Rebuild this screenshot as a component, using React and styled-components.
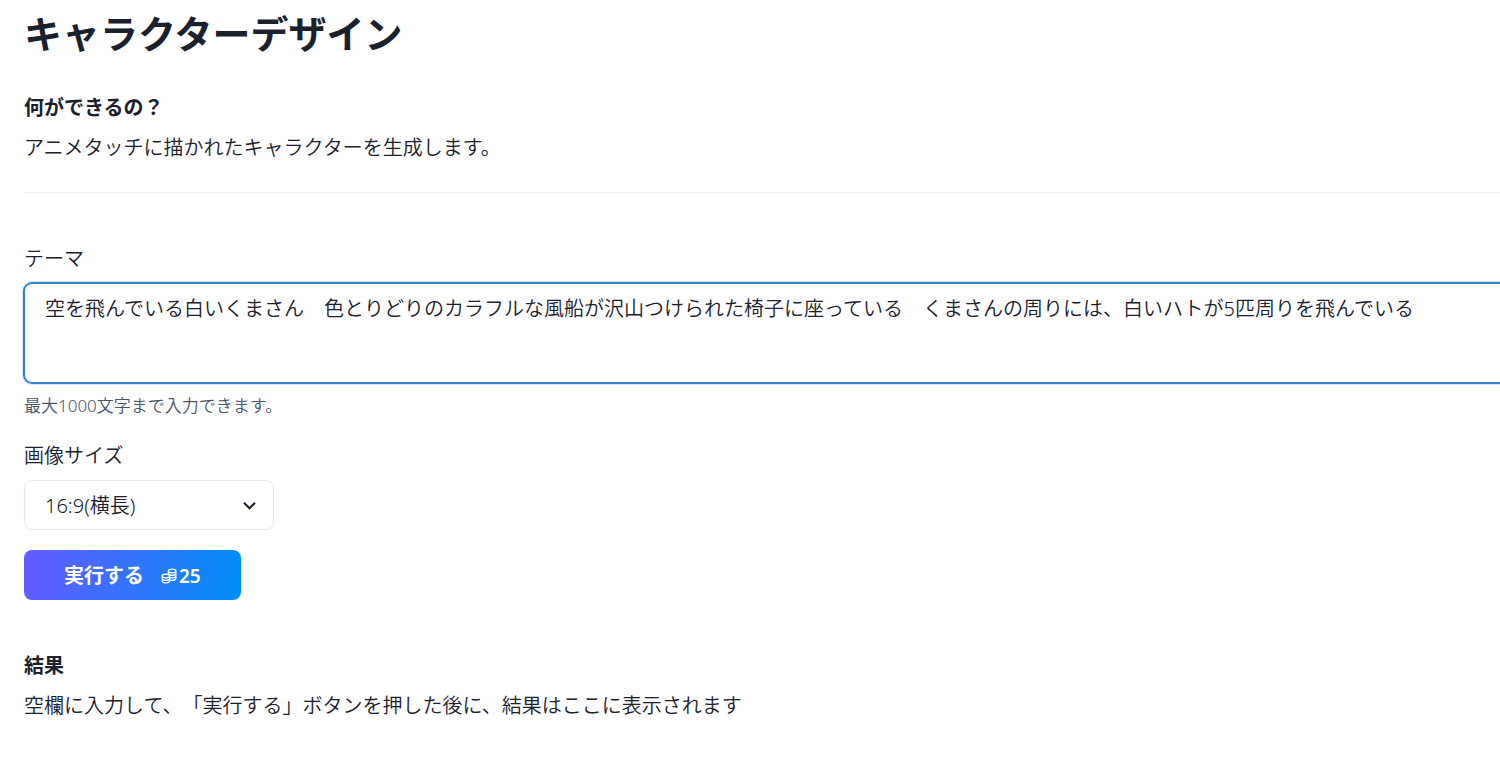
import React, { useState } from 'react';
import styled, { createGlobalStyle } from 'styled-components';
import { LiaCoinsSolid } from 'react-icons/lia';

const GlobalStyle = createGlobalStyle`
  *, *::before, *::after {
    box-sizing: border-box;
  }
  body {
    margin: 0;
    overflow-x: hidden;
    color: #1a202c;
    background: #fff;
    font-family: "Noto Sans", "Noto Sans CJK JP DemiLight", "Noto Sans CJK JP", sans-serif;
    font-size: 20px;
    font-weight: 350;
    line-height: 30px;
    text-spacing-trim: space-all;
  }
`;

const boldFont = '"Noto Sans", "Noto Sans CJK JP", sans-serif';

const Page = styled.main`
  padding: 8px 0 40px 24px;
`;

const Title = styled.h1`
  margin: 0 0 35px;
  font-family: ${boldFont};
  font-size: 38px;
  font-weight: 700;
  line-height: 50px;
`;

const Intro = styled.section`
  padding-bottom: 29px;
  margin-bottom: 51px;
  border-bottom: 1px solid #edf2f7;
`;

const Heading = styled.h2`
  margin: 0 0 10px;
  font-family: ${boldFont};
  font-size: 20px;
  font-weight: 700;
  line-height: 30px;
`;

const Text = styled.p`
  margin: 0;
`;

const Form = styled.form`
  display: flex;
  flex-direction: column;
  align-items: flex-start;
  margin-bottom: 51px;
`;

const Label = styled.label`
  margin-bottom: 9px;
`;

const Textarea = styled.textarea`
  display: block;
  align-self: stretch;
  height: 100px;
  margin-right: -8px;
  padding: 10px 20px;
  border: 1px solid #3182ce;
  border-radius: 8px;
  outline: 0;
  box-shadow: 0 0 0 1px #3182ce, 0 0 0 2px #d6e6f5;
  color: inherit;
  font: inherit;
  text-spacing-trim: inherit;
  resize: none;
`;

const Help = styled.div`
  margin: 10px 0 23px;
  color: #4a5568;
  font-size: 17px;
  line-height: 25px;
`;

const SelectBox = styled.div`
  position: relative;
  width: 250px;
  margin-bottom: 20px;
`;

const Select = styled.select`
  display: block;
  width: 100%;
  height: 50px;
  padding: 2px 40px 0 20px;
  border: 1px solid #e2e8f0;
  border-radius: 8px;
  background: #fff;
  color: inherit;
  font: inherit;
  appearance: none;
`;

const Chevron = styled.svg`
  position: absolute;
  top: 13px;
  right: 12px;
  width: 25px;
  height: 25px;
  fill: #1a202c;
  pointer-events: none;
`;

const Button = styled.button`
  display: inline-flex;
  align-items: center;
  gap: 15px;
  height: 50px;
  padding: 2px 40px 0;
  border: 0;
  border-radius: 8px;
  background: linear-gradient(100deg, #655bff, #008df5);
  color: #fff;
  font: inherit;
  font-family: ${boldFont};
  font-weight: 700;
  cursor: pointer;
`;

const Cost = styled.span`
  display: inline-flex;
  align-items: center;
  font-size: 19px;
  font-weight: 600;
`;

const CoinsIcon = styled(LiaCoinsSolid)`
  width: 20px;
  height: 20px;
  stroke-width: 0;
`;

const sizes = ['16:9(横長)', '1:1(正方形)', '9:16(縦長)'];

function App() {
  const [theme, setTheme] = useState(
    '空を飛んでいる白いくまさん　色とりどりのカラフルな風船が沢山つけられた椅子に座っている　くまさんの周りには、白いハトが5匹周りを飛んでいる'
  );
  const [size, setSize] = useState(sizes[0]);

  return (
    <>
      <GlobalStyle />
      <Page>
        <Title>キャラクターデザイン</Title>
        <Intro>
          <Heading>何ができるの？</Heading>
          <Text>アニメタッチに描かれたキャラクターを生成します。</Text>
        </Intro>
        <Form onSubmit={(e) => e.preventDefault()}>
          <Label htmlFor="theme">テーマ</Label>
          <Textarea
            id="theme"
            maxLength={1000}
            aria-describedby="theme-help"
            spellCheck={false}
            value={theme}
            onChange={(e) => setTheme(e.target.value)}
          />
          <Help id="theme-help">最大1000文字まで入力できます。</Help>
          <Label htmlFor="size">画像サイズ</Label>
          <SelectBox>
            <Select id="size" value={size} onChange={(e) => setSize(e.target.value)}>
              {sizes.map((item) => (
                <option key={item}>{item}</option>
              ))}
            </Select>
            <Chevron viewBox="0 0 24 24" aria-hidden="true">
              <path d="M16.59 8.59L12 13.17 7.41 8.59 6 10l6 6 6-6z" />
            </Chevron>
          </SelectBox>
          <Button type="submit">
            実行する
            <Cost>
              <CoinsIcon aria-hidden="true" />
              25
            </Cost>
          </Button>
        </Form>
        <Heading>結果</Heading>
        <Text>空欄に入力して、「実行する」ボタンを押した後に、結果はここに表示されます</Text>
      </Page>
    </>
  );
}

export default App;
